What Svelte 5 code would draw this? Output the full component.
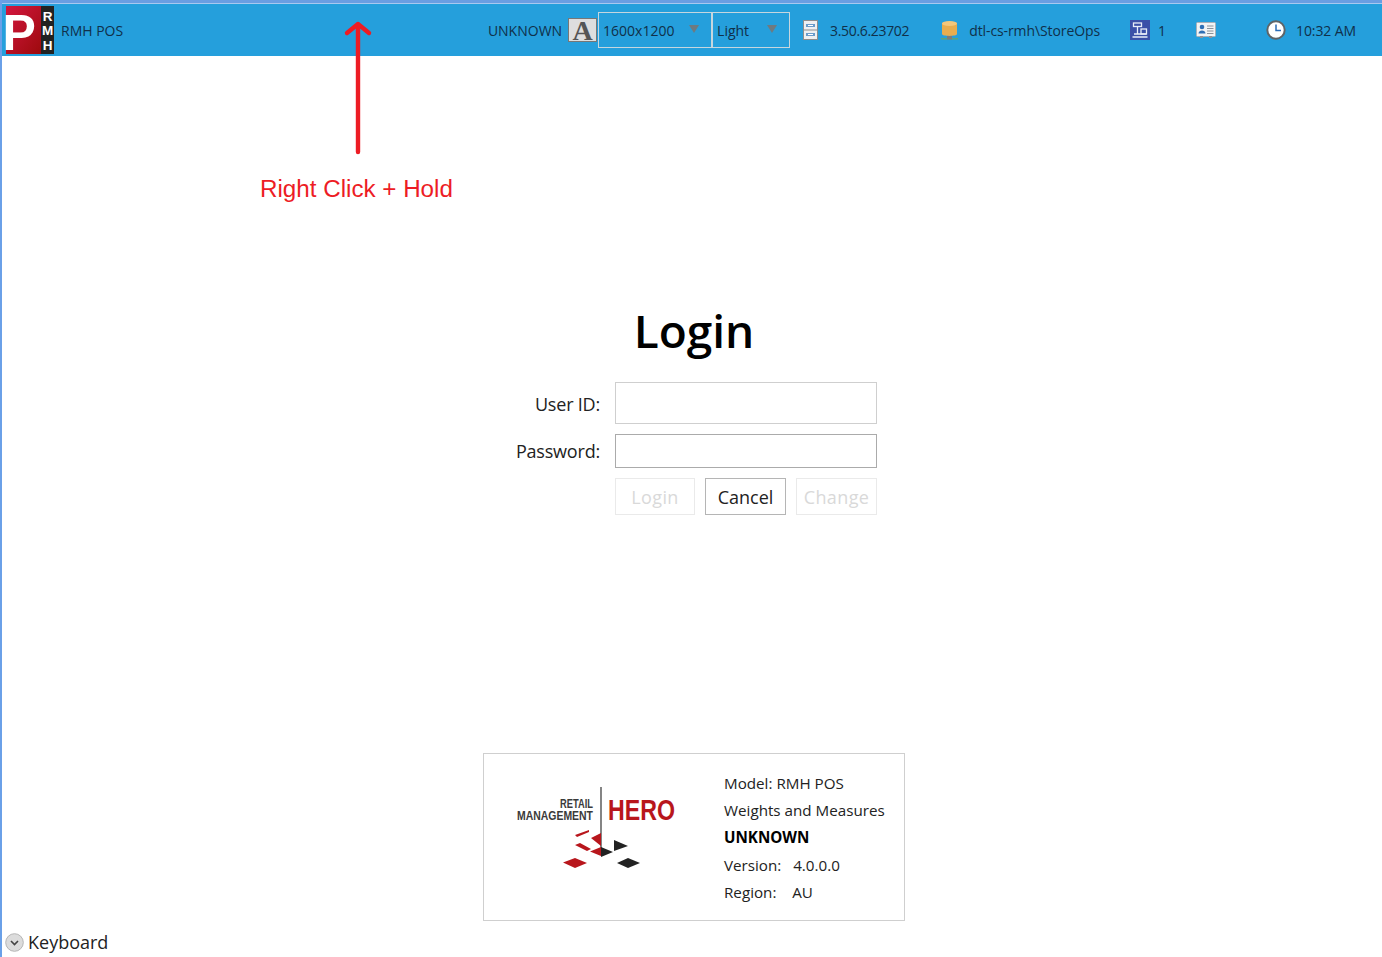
<script>
  const infoLines = [
    { text: 'Model: RMH POS' },
    { text: 'Weights and Measures' },
    { text: 'UNKNOWN', bold: true },
    { text: 'Version:\u00a0\u00a0\u00a04.0.0.0' },
    { text: 'Region:\u00a0\u00a0\u00a0\u00a0AU' }
  ];
</script>

<div class="window">
  <div class="topstrip"></div>

  <header class="topbar">
    <svg class="logo" width="52" height="48" viewBox="-4 0 52 48">
      <defs>
        <linearGradient id="logored" x1="0" y1="0" x2="1" y2="1">
          <stop offset="0" stop-color="#d3173f" />
          <stop offset="1" stop-color="#9c0a0c" />
        </linearGradient>
      </defs>
      <rect width="36" height="48" fill="url(#logored)" />
      <rect x="35" width="13" height="48" fill="#222" />
      <text x="-3.4" y="44" class="logo-p">P</text>
      <text x="41.5" y="14.5" class="logo-l">R</text>
      <text x="41.5" y="29" class="logo-l">M</text>
      <text x="41.5" y="44" class="logo-l">H</text>
    </svg>
    <span class="app-name">RMH POS</span>

    <div class="status">
      <span class="unknown">UNKNOWN</span>
      <div class="font-btn">A</div>
      <div class="combo size">
        <span>1600x1200</span>
        <i class="caret"></i>
      </div>
      <div class="combo theme">
        <span>Light</span>
        <i class="caret"></i>
      </div>

      <svg class="ico drawer" width="15" height="20" viewBox="0 0 15 20">
        <rect x=".5" y=".5" width="14" height="19" fill="#eef0f2" stroke="#8d8d8d" />
        <line x1="1" y1="10" x2="14" y2="10" stroke="#8d8d8d" />
        <rect x="3" y="4" width="9" height="3" fill="#6a9ccb" />
        <rect x="5" y="5" width="5" height="1" fill="#fff" />
        <rect x="3" y="13" width="9" height="3" fill="#6a9ccb" />
        <rect x="5" y="14" width="5" height="1" fill="#fff" />
      </svg>
      <span class="version">3.50.6.23702</span>

      <svg class="ico db" width="17" height="20" viewBox="0 0 17 20">
        <path d="M1 3.5C1 1 16 1 16 3.5V14C16 16.5 1 16.5 1 14Z" fill="#e8ad4f" />
        <ellipse cx="8.5" cy="3.5" rx="7.5" ry="2.4" fill="#f3c77c" />
        <rect x="0" y="18" width="17" height="1.5" fill="#5da37a" />
        <rect x="6" y="16" width="5" height="3.5" fill="#7c7c7c" />
      </svg>
      <span class="db-name">dtl-cs-rmh\StoreOps</span>

      <svg class="ico station" width="20" height="20" viewBox="0 0 20 20">
        <rect width="20" height="20" fill="#3b4fa8" />
        <g fill="none" stroke="#e8ecf8" stroke-width="1.3">
          <rect x="3.5" y="3" width="8" height="3.5" />
          <path d="M7.5 6.5V14M4 14H16.5M2.5 17H17.5" />
          <rect x="11" y="9" width="5.5" height="5" />
        </g>
      </svg>
      <span class="count">1</span>

      <svg class="ico idcard" width="20" height="16" viewBox="0 0 20 16">
        <rect x=".5" y=".5" width="19" height="14" rx="1" fill="#f1f3f5" stroke="#a9b0b8" />
        <circle cx="6" cy="5" r="2.3" fill="#2f6fb5" />
        <path d="M2.5 11.5C2.5 7.5 9.5 7.5 9.5 11.5Z" fill="#2f6fb5" />
        <path d="M11 4H17.5M11 6.5H17.5M11 9H17.5M11 11.5H17.5" stroke="#8b929a" />
        <rect x="4" y="14" width="3" height="2" fill="#8b929a" />
        <rect x="13" y="14" width="3" height="2" fill="#8b929a" />
      </svg>

      <svg class="ico clock" width="20" height="20" viewBox="0 0 20 20">
        <circle cx="10" cy="10" r="8.7" fill="#fff" stroke="#5e6468" stroke-width="2" />
        <path d="M10 4.5V10.5H15" fill="none" stroke="#2b6db8" stroke-width="1.5" />
      </svg>
      <span class="time">10:32 AM</span>
    </div>
  </header>

  <main class="content">
    <h1>Login</h1>

    <div class="form">
      <div class="row first">
        <label for="uid">User ID:</label>
        <input id="uid" class="tall" type="text" />
      </div>
      <div class="row">
        <label for="pwd">Password:</label>
        <input id="pwd" class="dark" type="password" />
      </div>
      <div class="buttons">
        <button class="off login" disabled>Login</button>
        <button class="cancel">Cancel</button>
        <button class="off change" disabled>Change</button>
      </div>
    </div>

    <div class="info">
      <svg class="hero" width="180" height="100" viewBox="0 0 180 100">
        <text x="91" y="32" class="rm" text-anchor="end" textLength="33" lengthAdjust="spacingAndGlyphs">RETAIL</text>
        <text x="91" y="44" class="rm" text-anchor="end" textLength="76" lengthAdjust="spacingAndGlyphs">MANAGEMENT</text>
        <text x="106" y="44" class="he" textLength="67" lengthAdjust="spacingAndGlyphs">HERO</text>
        <line x1="99" y1="11" x2="99" y2="79" stroke="#333" stroke-width="1.2" />
        <path d="M73 59L87 54V56L75 61ZM89 62L99 57V70ZM73 69L78 67L89 73L85 75ZM88 75.5L99 71V80Z" fill="#b8161c" />
        <path d="M99 71L111 76L99 81ZM112 64L126 70L112 75Z" fill="#222" />
        <path d="M61 86.5L73 82L85 87L73 92Z" fill="#b8161c" />
        <path d="M115 87L126 82L138 87L126 92Z" fill="#222" />
      </svg>
      <div class="lines">
        {#each infoLines as line}
          <div class:bold={line.bold}>{line.text}</div>
        {/each}
      </div>
    </div>

    <div class="keyboard">
      <svg width="19" height="19" viewBox="0 0 19 19">
        <circle cx="9.5" cy="9.5" r="8.8" fill="#dcdcdc" stroke="#b5b5b5" />
        <path d="M6 8L9.5 11.5L13 8" fill="none" stroke="#444" stroke-width="1.6" />
      </svg>
      <span>Keyboard</span>
    </div>

    <!-- annotation drawn over the screen -->
    <div class="note">Right Click + Hold</div>
  </main>

  <svg class="arrow" width="30" height="136" viewBox="0 0 30 136">
    <path d="M15 132V4M4 13L15 4L26 13" fill="none" stroke="#ed1c24" stroke-width="4.4" stroke-linecap="round" stroke-linejoin="round" />
  </svg>
</div>

<style>
  :global(body) {
    margin: 0;
    background: #fff;
  }

  .window {
    position: relative;
    height: 957px;
    overflow: hidden;
    font-family: "Open Sans", "Noto Sans", sans-serif;
    color: #111;
    border-left: 2px solid #6aa0e8;
    box-sizing: border-box;
    display: flex;
    flex-direction: column;
  }

  .topstrip {
    height: 3px;
    margin-left: -2px;
    background: #6a9ee2;
    border-bottom: 1px solid #a8c8f0;
  }

  .topbar {
    height: 52px;
    flex-shrink: 0;
    display: flex;
    align-items: center;
    background: #259fdc;
    font-size: 14px;
    color: #10304a;
    padding-left: 0;
  }

  .logo {
    margin-left: 0;
  }

  .logo-p {
    font: bold 50px "Liberation Sans", sans-serif;
    fill: #fff;
  }

  .logo-l {
    font: bold 13.5px "Liberation Sans", sans-serif;
    fill: #fff;
    text-anchor: middle;
  }

  .app-name {
    margin-left: 7px;
  }

  .status {
    display: flex;
    align-items: center;
    margin-left: auto;
    padding-right: 26px;
    white-space: nowrap;
  }

  .font-btn {
    width: 29px;
    height: 24px;
    margin-left: 6px;
    box-sizing: border-box;
    border: 1px solid #777;
    background: #dedede;
    color: #555;
    text-align: center;
    font: bold 28px/24px "Liberation Serif", serif;
  }

  .combo {
    height: 36px;
    box-sizing: border-box;
    border: 1px solid #c6d6de;
    display: flex;
    align-items: center;
    justify-content: space-between;
    padding: 0 12px 0 4px;
  }

  .combo.size {
    width: 114px;
    margin-left: 1px;
  }

  .combo.theme {
    width: 78px;
  }

  .caret {
    width: 0;
    height: 0;
    margin-bottom: 3px;
    border-left: 5px solid transparent;
    border-right: 5px solid transparent;
    border-top: 8px solid #6e7a80;
  }

  .drawer {
    margin-left: 13px;
  }

  .version {
    margin-left: 12px;
    letter-spacing: -0.33px;
  }

  .db {
    margin-left: 32px;
  }

  .db-name {
    margin-left: 11px;
    letter-spacing: -0.1px;
  }

  .station {
    margin-left: 30px;
  }

  .count {
    margin-left: 8px;
  }

  .idcard {
    margin-left: 30px;
  }

  .clock {
    margin-left: 50px;
  }

  .time {
    margin-left: 10px;
    letter-spacing: -0.1px;
  }

  .content {
    flex: 1;
    display: flex;
    flex-direction: column;
    align-items: center;
    position: relative;
  }

  h1 {
    margin: 242px 0 0 4px;
    font-size: 46px;
    line-height: 64px;
    font-weight: 600;
    color: #000;
  }

  .form {
    margin-top: 20px;
    margin-left: 4px;
    width: 422px;
    display: flex;
    flex-direction: column;
    gap: 10px;
    font-size: 18px;
    color: #222;
  }

  .row {
    display: flex;
    align-items: center;
    justify-content: flex-end;
    gap: 15px;
    padding-right: 28px;
  }

  .row label {
    line-height: 24px;
    letter-spacing: -0.2px;
  }

  .row.first label {
    margin-top: 2px;
  }

  input {
    width: 262px;
    height: 34px;
    box-sizing: border-box;
    border: 1px solid #ababab;
    background: #fff;
    padding: 0;
    outline: none;
  }

  input.tall {
    height: 42px;
    border-color: #cfcfcf;
  }

  input.dark {
    border-color: #ababab;
  }

  .buttons {
    display: flex;
    justify-content: flex-end;
    gap: 10px;
    padding-right: 28px;
  }

  button {
    height: 37px;
    box-sizing: border-box;
    padding: 0;
    background: #fff;
    font: 18px "Open Sans", "Noto Sans", sans-serif;
    color: #222;
    border: 1px solid #b5b5b5;
  }

  button.off {
    color: #d9d9d9;
    border-color: #eaeaea;
    letter-spacing: 0.4px;
  }

  .login {
    width: 80px;
  }

  .cancel {
    width: 81px;
  }

  .change {
    width: 81px;
  }

  .info {
    margin-top: 238px;
    margin-left: 4px;
    width: 422px;
    height: 168px;
    box-sizing: border-box;
    border: 1px solid #cfcfcf;
    display: flex;
    padding-left: 18px;
    font-size: 15.2px;
    color: #222;
  }

  .hero {
    margin-top: 22px;
    flex-shrink: 0;
  }

  .rm {
    font: bold 12px "Liberation Sans", sans-serif;
    fill: #3a3a3a;
  }

  .he {
    font: bold 29px "Liberation Sans", sans-serif;
    fill: #b8161c;
  }

  .lines {
    margin-left: 42px;
    padding-top: 16px;
    line-height: 27.2px;
    white-space: nowrap;
  }

  .bold {
    font-weight: 700;
    color: #000;
  }

  .keyboard {
    position: absolute;
    left: 3px;
    bottom: 3px;
    display: flex;
    align-items: center;
    gap: 4px;
    font-size: 18px;
    line-height: 24px;
    color: #222;
  }

  .note {
    position: absolute;
    left: 258px;
    top: 117px;
    font: 24.2px/32px "Liberation Sans", sans-serif;
    color: #ed1c24;
    white-space: nowrap;
  }

  .arrow {
    position: absolute;
    left: 341px;
    top: 20px;
  }
</style>
